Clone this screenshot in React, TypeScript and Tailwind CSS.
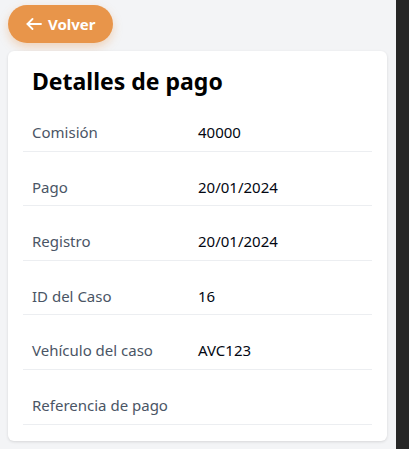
import React from 'react'

interface Row {
  label: string
  value: string
}

const rows: Row[] = [
  { label: 'Comisión', value: '40000' },
  { label: 'Pago', value: '20/01/2024' },
  { label: 'Registro', value: '20/01/2024' },
  { label: 'ID del Caso', value: '16' },
  { label: 'Vehículo del caso', value: 'AVC123' },
  { label: 'Referencia de pago', value: '' },
]

export default function App() {
  return (
    <div className="flex h-[449px] w-[409px] overflow-hidden bg-gray-100 font-['Noto_Sans',sans-serif]">
      <div className="flex-1 pl-2 pr-[9px] pt-[5px]">
        <button className="flex h-[38px] w-[105px] items-center gap-[6px] rounded-full bg-[#e8954a] pl-[18px] text-[15px] font-bold text-white shadow-[0_4px_10px_rgba(232,149,74,0.35)]">
          {/* back arrow */}
          <svg width="16" height="12" viewBox="0 0 16 12" fill="none" stroke="currentColor" strokeWidth="1.8" strokeLinecap="round" strokeLinejoin="round">
            <path d="M15 6H1.5" />
            <path d="M6.5 1 1.5 6l5 5" />
          </svg>
          Volver
        </button>

        <div className="mt-2 rounded-md bg-white px-[15px] pb-4 pt-[14px] shadow-[0_1px_3px_rgba(0,0,0,0.12)]">
          <h1 className="pl-[9px] text-[23px] leading-8 font-bold text-black">Detalles de pago</h1>
          <div>
            {rows.map((row) => (
              <div
                key={row.label}
                className="grid grid-cols-[166px_1fr] border-b border-[#eceef1] pb-[8.6px] pl-[9px] pt-[25px] text-[15px] leading-5"
              >
                <span className="text-gray-600">{row.label}</span>
                <span className="text-gray-950">{row.value}</span>
              </div>
            ))}
          </div>
        </div>
      </div>
      <div className="w-[13px] bg-[#262626]" />
    </div>
  )
}
